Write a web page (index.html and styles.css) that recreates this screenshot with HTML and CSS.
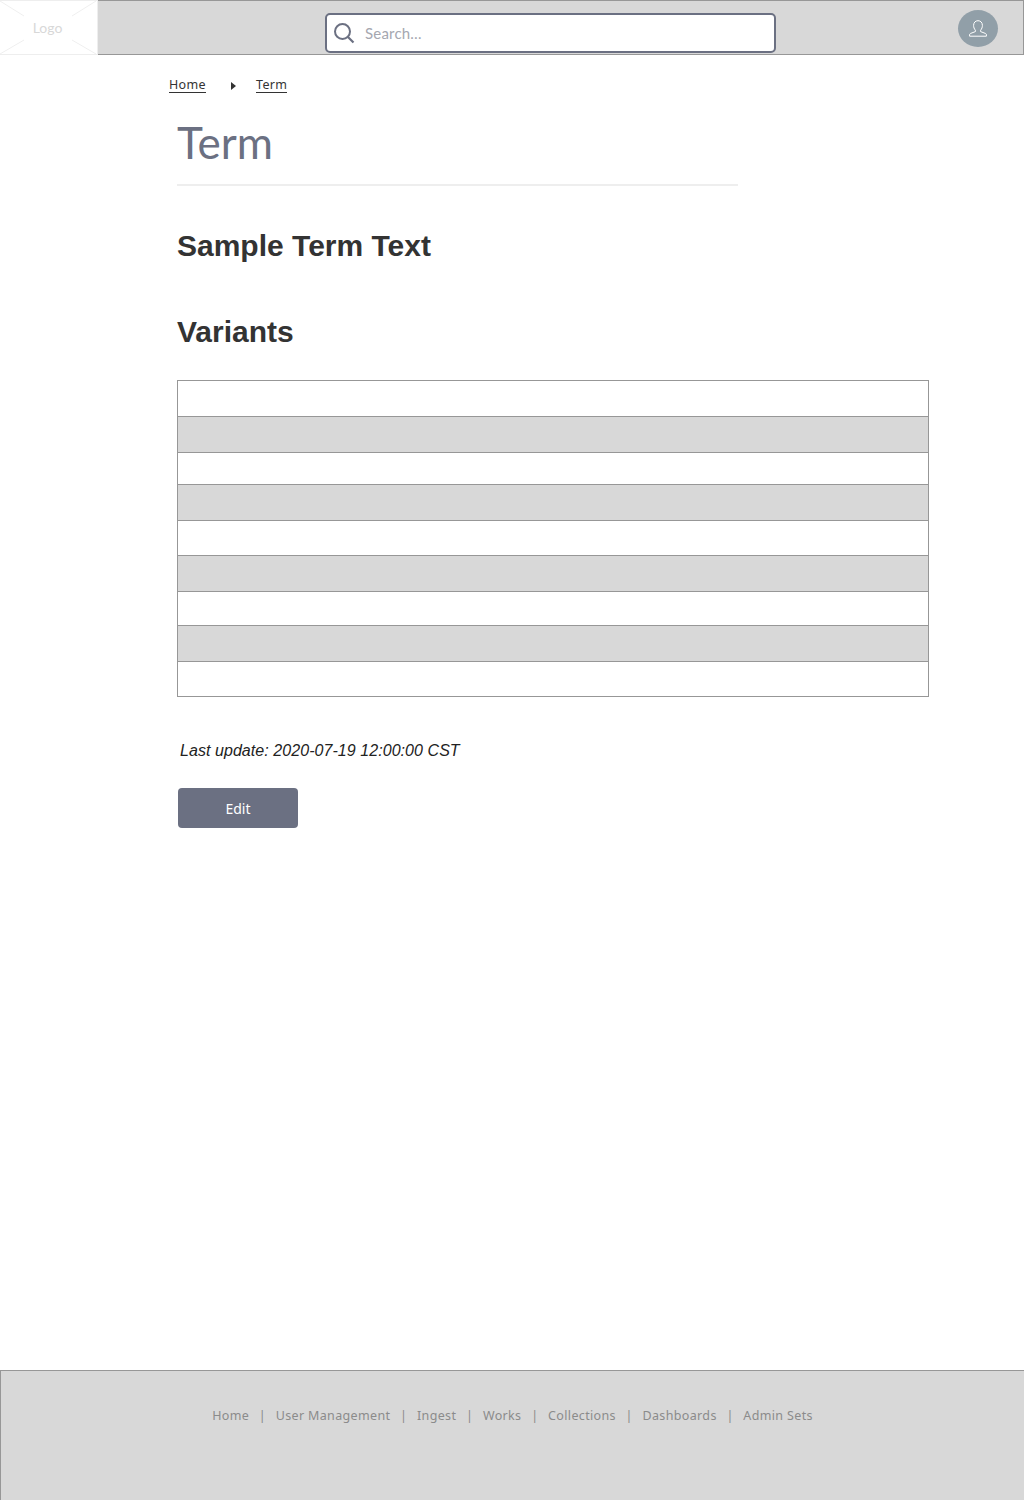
FILE: index.html
```html
<!DOCTYPE html>
<html lang="en">
<head>
    <meta charset="UTF-8">
    <meta name="viewport" content="width=device-width, initial-scale=1.0">
    <title>Term</title>
    <link rel="stylesheet" href="styles.css">
</head>
<body>
    <header class="topbar">
        <div class="logo">
            <svg class="logo-cross" width="96" height="53" viewBox="0 0 96 53">
                <path d="M0 0L24 15M96 0L72 15M0 53L24 39M96 53L72 39" fill="none" stroke="#efefef" stroke-width="1"/>
            </svg>
            <span class="logo-text">Logo</span>
        </div>
        <div class="search-wrap">
            <div class="search">
                <svg class="search-icon" width="22" height="22" viewBox="0 0 22 22">
                    <circle cx="9.5" cy="9.5" r="7.5" fill="none" stroke="#6b7082" stroke-width="2"/>
                    <path d="M15 15L20.5 20.5" fill="none" stroke="#6b7082" stroke-width="2.2"/>
                </svg>
                <span class="search-text">Search…</span>
            </div>
        </div>
        <div class="avatar">
            <svg width="18" height="17" viewBox="0 0 18 17">
                <path d="M6.4 10.2C5.2 8.9 4.6 7.2 4.6 5.4C4.6 2.6 6.4 0.7 9 0.7C11.6 0.7 13.4 2.6 13.4 5.4C13.4 7.2 12.8 8.9 11.6 10.2V11.6L16.6 13.5C17.2 13.8 17.4 14.2 17.4 14.8V16.2H0.6V14.8C0.6 14.2 0.8 13.8 1.4 13.5L6.4 11.6Z" fill="none" stroke="#ffffff" stroke-width="1"/>
            </svg>
        </div>
    </header>

    <nav class="breadcrumb">
        <a href="#">Home</a>
        <span class="crumb-arrow"></span>
        <a href="#">Term</a>
    </nav>

    <main class="content">
        <h1 class="page-title">Term</h1>
        <h2 class="term-text">Sample Term Text</h2>
        <h2 class="variants-title">Variants</h2>
        <div class="variants">
            <div class="variant"></div>
            <div class="variant"></div>
            <div class="variant"></div>
            <div class="variant"></div>
            <div class="variant"></div>
            <div class="variant"></div>
            <div class="variant"></div>
            <div class="variant"></div>
            <div class="variant"></div>
        </div>
        <p class="updated">Last update: 2020-07-19 12:00:00 CST</p>
        <button class="edit-btn">Edit</button>
    </main>

    <footer class="footer">
        <a href="#">Home</a><span class="sep">|</span>
        <a href="#">User Management</a><span class="sep">|</span>
        <a href="#">Ingest</a><span class="sep">|</span>
        <a href="#">Works</a><span class="sep">|</span>
        <a href="#">Collections</a><span class="sep">|</span>
        <a href="#">Dashboards</a><span class="sep">|</span>
        <a href="#">Admin Sets</a>
    </footer>
</body>
</html>
```

FILE: styles.css
```css
* {
    box-sizing: border-box;
}
html, body {
    margin: 0;
    padding: 0;
}
body {
    width: 1024px;
    height: 1500px;
    display: flex;
    flex-direction: column;
    background: #fff;
    font-family: "Liberation Sans", Arial, sans-serif;
}

/* top bar */
.topbar {
    height: 55px;
    flex: none;
    display: flex;
    background: #d8d8d8;
    border: 1px solid #979797;
    border-left: 0;
}
.logo {
    position: relative;
    width: 98px;
    height: 55px;
    margin-top: -1px;
    flex: none;
    display: flex;
    align-items: center;
    justify-content: center;
    background: #fff;
    border: 1px solid #eeeeee;
    border-left: 0;
}
.logo-cross {
    position: absolute;
    top: 0;
    left: 0;
}
.logo-text {
    margin: 0 2px 0 0;
    font: 14px Lato, sans-serif;
    color: #d8d8d8;
}
.search-wrap {
    margin-left: 227px;
    padding-top: 12px;
}
.search {
    width: 451px;
    height: 40px;
    display: flex;
    align-items: center;
    padding-left: 6px;
    background: #fff;
    border: 2px solid #6b7082;
    border-radius: 5px;
}
.search-icon {
    flex: none;
}
.search-text {
    margin-left: 10px;
    font: 15px Lato, sans-serif;
    letter-spacing: 0.2px;
    color: #a5a7b0;
}
.avatar {
    width: 40px;
    height: 37px;
    margin: 9px 0 0 182px;
    display: flex;
    align-items: center;
    justify-content: center;
    background: #919fa8;
    border-radius: 50%;
}

/* breadcrumb */
.breadcrumb {
    height: 37px;
    flex: none;
    display: flex;
    align-items: center;
    padding: 22px 0 0 169px;
    font: 12.5px "Noto Sans", sans-serif;
    letter-spacing: 0.35px;
}
.breadcrumb a {
    color: #333;
    text-decoration: none;
    border-bottom: 1px solid #333;
    line-height: 15px;
}
.crumb-arrow {
    width: 0;
    height: 0;
    margin: 2px 20px 0 25px;
    border-left: 5px solid #333;
    border-top: 4px solid transparent;
    border-bottom: 4px solid transparent;
}

/* main */
.content {
    flex: 1;
    padding-left: 177px;
}
.page-title {
    width: 561px;
    height: 94px;
    margin: 0;
    padding: 20px 0 0 0;
    border-bottom: 2px solid #eeeeee;
    font: 400 44px/60px Lato, sans-serif;
    color: #6b7082;
}
.term-text, .variants-title {
    margin: 0;
    font: bold 30px/36px "Liberation Sans", Arial, sans-serif;
    color: #333;
}
.term-text {
    padding-top: 42px;
}
.variants-title {
    padding-top: 50px;
}
.variants {
    width: 752px;
    margin-top: 30px;
    border: 1px solid #979797;
}
.variant {
    height: 36px;
    border-top: 1px solid #979797;
}
.variant:first-child {
    height: 35px;
    border-top: 0;
}
.variant:nth-child(even) {
    background: #d8d8d8;
}
.variant:nth-child(3) { height: 32px; }
.variant:nth-child(5) { height: 35px; }
.variant:nth-child(7) { height: 34px; }
.variant:nth-child(9) { height: 35px; }
.updated {
    margin: 43px 0 0 3px;
    font: italic 16px/22px "Liberation Sans", Arial, sans-serif;
    letter-spacing: 0.06px;
    color: #222;
}
.edit-btn {
    display: block;
    width: 120px;
    height: 40px;
    margin: 26px 0 0 1px;
    padding: 0;
    border: 0;
    border-radius: 4px;
    background: #6b7082;
    color: #fff;
    font: 14px "Noto Sans", sans-serif;
}

/* footer */
.footer {
    height: 130px;
    flex: none;
    display: flex;
    justify-content: center;
    align-items: flex-start;
    padding: 35px 0 0 0;
    background: #d8d8d8;
    border-top: 1px solid #979797;
    border-left: 1px solid #979797;
    font: 12.5px/20px "Noto Sans", sans-serif;
    letter-spacing: 0.35px;
    color: #8b8b8b;
}
.footer a {
    color: #8b8b8b;
    text-decoration: none;
}
.sep {
    margin: 0 9.7px;
}
```
